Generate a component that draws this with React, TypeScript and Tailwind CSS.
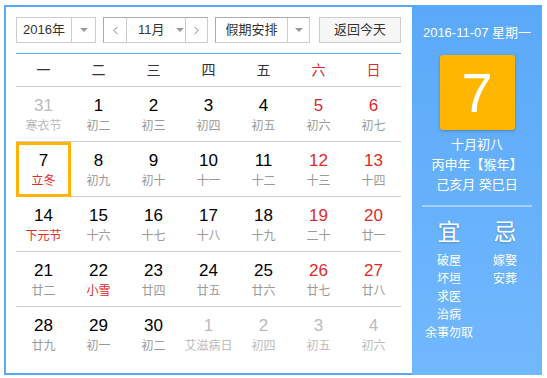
import { ChevronLeft, ChevronRight } from "lucide-react";

type Day = {
  num: number;
  lunar: string;
  other?: boolean;
  festival?: boolean;
  selected?: boolean;
};

const weeks: Day[][] = [
  [
    { num: 31, lunar: "寒衣节", other: true },
    { num: 1, lunar: "初二" },
    { num: 2, lunar: "初三" },
    { num: 3, lunar: "初四" },
    { num: 4, lunar: "初五" },
    { num: 5, lunar: "初六" },
    { num: 6, lunar: "初七" },
  ],
  [
    { num: 7, lunar: "立冬", festival: true, selected: true },
    { num: 8, lunar: "初九" },
    { num: 9, lunar: "初十" },
    { num: 10, lunar: "十一" },
    { num: 11, lunar: "十二" },
    { num: 12, lunar: "十三" },
    { num: 13, lunar: "十四" },
  ],
  [
    { num: 14, lunar: "下元节", festival: true },
    { num: 15, lunar: "十六" },
    { num: 16, lunar: "十七" },
    { num: 17, lunar: "十八" },
    { num: 18, lunar: "十九" },
    { num: 19, lunar: "二十" },
    { num: 20, lunar: "廿一" },
  ],
  [
    { num: 21, lunar: "廿二" },
    { num: 22, lunar: "小雪", festival: true },
    { num: 23, lunar: "廿四" },
    { num: 24, lunar: "廿五" },
    { num: 25, lunar: "廿六" },
    { num: 26, lunar: "廿七" },
    { num: 27, lunar: "廿八" },
  ],
  [
    { num: 28, lunar: "廿九" },
    { num: 29, lunar: "初一" },
    { num: 30, lunar: "初二" },
    { num: 1, lunar: "艾滋病日", other: true },
    { num: 2, lunar: "初四", other: true },
    { num: 3, lunar: "初五", other: true },
    { num: 4, lunar: "初六", other: true },
  ],
];

const weekdays = ["一", "二", "三", "四", "五", "六", "日"];

function Caret() {
  return (
    <span className="w-0 h-0 border-l-[4px] border-r-[4px] border-t-[4px] border-l-transparent border-r-transparent border-t-[#999]" />
  );
}

export default function App() {
  return (
    <div
      className="ml-[4px] mt-[5px] w-[538px] h-[370px] flex border-2 border-r-0 border-[#5aa9f8] bg-white"
      style={{ fontFamily: '"Liberation Sans", Arial, "Noto Sans CJK SC", sans-serif' }}
    >
      {/* Calendar */}
      <div className="w-[406px] pl-[10px] pt-[10px]">
        {/* Controls */}
        <div className="flex h-[26px] text-[13px] text-[#333]">
          <div className="w-[80px] flex border border-[#ccc]">
            <div className="flex-1 flex items-center justify-center">2016年</div>
            <div className="w-[24px] border-l border-[#ccc] flex items-center justify-center">
              <Caret />
            </div>
          </div>
          <div className="ml-[7px] w-[105px] flex border border-[#aaa] border-r-[#ccc] border-b-[#ccc]">
            <div className="w-[22px] flex items-center justify-center text-[#666]">
              <ChevronLeft className="w-[13px] h-[13px]" strokeWidth={1.5} />
            </div>
            <div className="w-[60px] border-l border-r border-[#ccc] flex items-center pl-[11px] gap-[11px]">
              <span>11月</span>
              <Caret />
            </div>
            <div className="flex-1 flex items-center justify-center text-[#666]">
              <ChevronRight className="w-[13px] h-[13px]" strokeWidth={1.5} />
            </div>
          </div>
          <div className="ml-[7px] w-[95px] flex border border-[#aaa] border-r-[#ccc] border-b-[#ccc]">
            <div className="w-[71px] flex items-center justify-center">假期安排</div>
            <div className="flex-1 border-l border-[#ccc] flex items-center justify-center">
              <Caret />
            </div>
          </div>
          <div className="ml-[9px] w-[82px] flex items-center justify-center border border-[#ccc] bg-[#f7f7f7]">
            返回今天
          </div>
        </div>

        {/* Weekdays */}
        <div className="mt-[10px] w-[385px] border-t border-[#5aa9f8] border-b border-b-[#ccc] grid grid-cols-7 h-[34px] items-center text-[14px]">
          {weekdays.map((w, i) => (
            <div key={w} className={`text-center ${i >= 5 ? "text-[#e02a2a]" : "text-[#333]"}`}>
              {w}
            </div>
          ))}
        </div>

        {/* Days */}
        <div className="w-[385px]">
          {weeks.map((week, r) => (
            <div
              key={r}
              className={`grid grid-cols-7 h-[55px] ${r < weeks.length - 1 ? "border-b border-[#ccc]" : ""}`}
            >
              {week.map((d, i) => {
                const numColor = d.other ? "text-[#bbb]" : i >= 5 ? "text-[#e02a2a]" : "text-black";
                const lunarColor = d.other ? "text-[#bbb]" : d.festival ? "text-[#e02a2a]" : "text-[#999]";
                return (
                  <div key={i} className="relative flex flex-col items-center pt-[9px]">
                    {d.selected && (
                      <div className="absolute left-0 top-0 w-[55px] h-[55px] border-[3px] border-[#ffb400]" />
                    )}
                    <div className={`text-[17px] leading-[20px] ${numColor}`}>{d.num}</div>
                    <div className={`mt-[2px] text-[12px] leading-[16px] whitespace-nowrap ${lunarColor}`}>
                      {d.lunar}
                    </div>
                  </div>
                );
              })}
            </div>
          ))}
        </div>
      </div>

      {/* Side panel */}
      <div className="w-[130px] -mb-[2px] -mt-[2px] pt-[2px] bg-gradient-to-b from-[#5aa9f8] to-[#72b8ff] text-white flex flex-col items-center">
        <div className="mt-[16px] text-[13px] leading-[20px]">2016-11-07 星期一</div>
        <div className="mt-[12px] w-[75px] h-[75px] rounded-[3px] bg-[#ffb600] shadow-[0_1px_3px_rgba(0,0,0,0.25)] flex items-center justify-center text-[56px] leading-none">
          7
        </div>
        <div className="mt-[5px] text-[13px] leading-[20px] text-center">
          <div>十月初八</div>
          <div>丙申年【猴年】</div>
          <div>己亥月 癸巳日</div>
        </div>
        <div className="mt-[10px] w-[110px] h-[2px] bg-white/40" />
        <div className="mt-[10px] w-[112px] flex">
          <div className="w-[56px] flex flex-col items-center">
            <div className="text-[23px] leading-[30px] [text-shadow:0_1px_2px_rgba(0,0,0,0.2)]">宜</div>
            <div className="mt-[5px] text-[12px] leading-[18px] text-center">
              <div>破屋</div>
              <div>坏垣</div>
              <div>求医</div>
              <div>治病</div>
              <div>余事勿取</div>
            </div>
          </div>
          <div className="w-[56px] flex flex-col items-center">
            <div className="text-[23px] leading-[30px] [text-shadow:0_1px_2px_rgba(0,0,0,0.2)]">忌</div>
            <div className="mt-[5px] text-[12px] leading-[18px] text-center">
              <div>嫁娶</div>
              <div>安葬</div>
            </div>
          </div>
        </div>
      </div>
    </div>
  );
}
